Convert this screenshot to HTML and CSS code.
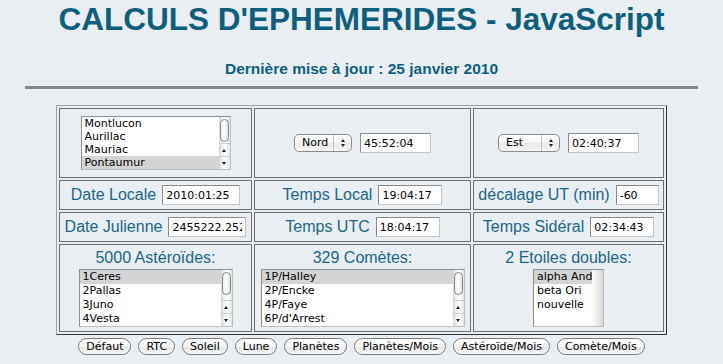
FILE: index.html
```html
<!DOCTYPE html>
<html lang="fr">
<head>
    <meta charset="UTF-8">
    <title>Calculs d'éphémérides</title>
    <link rel="stylesheet" href="styles.css">
</head>
<body>
    <h1 class="title">CALCULS D'EPHEMERIDES - JavaScript</h1>
    <h2 class="update">Dernière mise à jour : 25 janvier 2010</h2>
    <div class="rule"></div>

    <div class="grid">
        <!-- lieu -->
        <div class="cell">
            <div class="listbox list-city">
                <div class="options">
                    <div class="option">Montlucon</div>
                    <div class="option">Aurillac</div>
                    <div class="option">Mauriac</div>
                    <div class="option selected">Pontaumur</div>
                </div>
                <div class="scrollbar">
                    <div class="thumb"></div>
                    <div class="spacer"></div>
                    <div class="arrow"><span class="tri up"></span></div>
                    <div class="arrow"><span class="tri down"></span></div>
                </div>
            </div>
        </div>
        <div class="cell wide-gap">
            <div class="popup popup-ns">
                <span class="popup-text">Nord</span>
                <span class="popup-arrows"><span class="tri up"></span><span class="tri down"></span></span>
            </div>
            <input class="field field-coord" value="45:52:04">
        </div>
        <div class="cell wide-gap">
            <div class="popup popup-ew">
                <span class="popup-text">Est</span>
                <span class="popup-arrows"><span class="tri up"></span><span class="tri down"></span></span>
            </div>
            <input class="field field-coord" value="02:40:37">
        </div>

        <!-- dates et temps -->
        <div class="cell">
            <span class="label">Date Locale</span>
            <input class="field field-date" value="2010:01:25">
        </div>
        <div class="cell">
            <span class="label">Temps Local</span>
            <input class="field field-time" value="19:04:17">
        </div>
        <div class="cell">
            <span class="label">décalage UT (min)</span>
            <input class="field field-short" value="-60">
        </div>

        <div class="cell">
            <span class="label">Date Julienne</span>
            <input class="field field-date" value="2455222.252">
        </div>
        <div class="cell">
            <span class="label">Temps UTC</span>
            <input class="field field-time" value="18:04:17">
        </div>
        <div class="cell">
            <span class="label">Temps Sidéral</span>
            <input class="field field-time" value="02:34:43">
        </div>

        <!-- objets -->
        <div class="cell stack">
            <span class="label">5000 Astéroïdes:</span>
            <div class="listbox list-ast">
                <div class="options">
                    <div class="option selected">1Ceres</div>
                    <div class="option">2Pallas</div>
                    <div class="option">3Juno</div>
                    <div class="option">4Vesta</div>
                </div>
                <div class="scrollbar">
                    <div class="thumb"></div>
                    <div class="spacer"></div>
                    <div class="arrow"><span class="tri up"></span></div>
                    <div class="arrow"><span class="tri down"></span></div>
                </div>
            </div>
        </div>
        <div class="cell stack">
            <span class="label">329 Comètes:</span>
            <div class="listbox list-com">
                <div class="options">
                    <div class="option selected">1P/Halley</div>
                    <div class="option">2P/Encke</div>
                    <div class="option">4P/Faye</div>
                    <div class="option">6P/d'Arrest</div>
                </div>
                <div class="scrollbar">
                    <div class="thumb"></div>
                    <div class="spacer"></div>
                    <div class="arrow"><span class="tri up"></span></div>
                    <div class="arrow"><span class="tri down"></span></div>
                </div>
            </div>
        </div>
        <div class="cell stack">
            <span class="label">2 Etoiles doubles:</span>
            <div class="listbox list-star">
                <div class="options">
                    <div class="option selected">alpha And</div>
                    <div class="option">beta Ori</div>
                    <div class="option">nouvelle</div>
                </div>
                <div class="scrollbar empty"></div>
            </div>
        </div>
    </div>

    <div class="actions">
        <button class="btn">Défaut</button>
        <button class="btn">RTC</button>
        <button class="btn">Soleil</button>
        <button class="btn">Lune</button>
        <button class="btn">Planètes</button>
        <button class="btn">Planètes/Mois</button>
        <button class="btn">Astéroïde/Mois</button>
        <button class="btn">Comète/Mois</button>
    </div>
</body>
</html>
```

FILE: styles.css
```css
body {
    margin: 0;
    background: #e9eef3;
    font-family: "Liberation Sans", Arial, sans-serif;
}
.title {
    margin: 1px 0 0;
    text-align: center;
    font-size: 31.5px;
    line-height: 36px;
    font-weight: bold;
    color: #0f5f7c;
}
.update {
    margin: 23px 0 0;
    text-align: center;
    font-size: 15.5px;
    line-height: 18px;
    font-weight: bold;
    color: #0f5f7c;
}
.rule {
    width: 673px;
    height: 3px;
    margin: 8px auto 0;
    background: #888;
}
.grid {
    width: 605px;
    margin: 16px auto 0;
    display: grid;
    grid-template-columns: 193px 217px 191px;
    grid-template-rows: 70px 30px 30px 88px;
    gap: 2px;
    padding: 2px;
    border: 1px solid;
    border-color: #a0a0a0 #333 #333 #a0a0a0;
}
.cell {
    box-sizing: border-box;
    border: 1px solid #707070;
    display: flex;
    align-items: center;
    justify-content: center;
    gap: 6px;
}
.cell.wide-gap {
    gap: 8px;
}
.cell.stack {
    flex-direction: column;
    justify-content: flex-start;
    padding-top: 4px;
    gap: 2px;
}
.label {
    font-size: 16px;
    line-height: 18px;
    color: #1d6688;
    white-space: nowrap;
}
.field {
    box-sizing: border-box;
    height: 20px;
    margin: 0;
    padding: 0 3px;
    border: 1px solid;
    border-color: #8a8a8a #c4c4c4 #c4c4c4 #8a8a8a;
    background: #fff;
    font: 11px "DejaVu Sans", sans-serif;
    color: #000;
}
.field-coord { width: 71px; }
.field-date { width: 78px; }
.field-time { width: 64px; }
.field-short { width: 43px; }

/* popup menus */
.popup {
    box-sizing: border-box;
    height: 18px;
    display: flex;
    align-items: stretch;
    border: 1px solid #8d8d8d;
    border-radius: 5px;
    background: linear-gradient(#ffffff, #f4f4f4 50%, #e8e8e8 51%, #f6f6f6);
    font: 11px "DejaVu Sans", sans-serif;
}
.popup-ns { width: 58px; }
.popup-ew { width: 62px; }
.popup-text {
    flex: 1;
    padding-left: 7px;
    line-height: 16px;
}
.popup-arrows {
    width: 17px;
    border-left: 1px solid #c2c2c2;
    display: flex;
    flex-direction: column;
    align-items: center;
    justify-content: center;
    gap: 2px;
}
.tri {
    width: 0;
    height: 0;
    border-left: 2.5px solid transparent;
    border-right: 2.5px solid transparent;
}
.tri.up { border-bottom: 3px solid #222; }
.tri.down { border-top: 3px solid #222; }

/* list boxes */
.listbox {
    box-sizing: border-box;
    display: flex;
    border: 1px solid;
    border-color: #8e8e8e #bdbdbd #bdbdbd #8e8e8e;
    background: #fff;
}
.list-city { width: 150px; height: 54px; }
.list-ast { width: 154px; height: 58px; }
.list-com { width: 204px; height: 58px; }
.list-star { width: 71px; height: 58px; }
.options {
    flex: 1;
}
.option {
    height: 14px;
    line-height: 14px;
    padding-left: 3px;
    font: 11px/14px "DejaVu Sans", sans-serif;
    color: #000;
    white-space: nowrap;
}
.list-city .option {
    height: 13px;
    line-height: 13px;
}
.option.selected {
    background: #d4d4d4;
}
.scrollbar {
    width: 11px;
    display: flex;
    flex-direction: column;
    background: linear-gradient(to right, #d6d6d6, #f4f4f4 35%, #ffffff 60%, #e2e2e2);
}
.scrollbar.empty {
    width: 12px;
    background: linear-gradient(to right, #fafafa, #ececec 50%, #d6d6d6);
}
.thumb {
    box-sizing: border-box;
    height: 23px;
    margin: 2px 1px 0;
    border: 1px solid #8a8a8a;
    border-radius: 5px;
    background: linear-gradient(to right, #ececec, #ffffff 50%, #dcdcdc);
}
.spacer {
    flex: 1;
}
.arrow {
    height: 12px;
    display: flex;
    align-items: center;
    justify-content: center;
    border-top: 1px solid #cfcfcf;
}

/* buttons */
.actions {
    display: flex;
    justify-content: center;
    gap: 7px;
    margin-top: 3px;
}
.btn {
    box-sizing: border-box;
    height: 17px;
    margin: 0;
    padding: 0 7px;
    border: 1px solid #7a7a7a;
    border-radius: 9px;
    background: linear-gradient(#ffffff, #f5f5f5 50%, #e6e6e6 51%, #f6f6f6);
    font: 11px/15px "DejaVu Sans", sans-serif;
    color: #000;
}
```
